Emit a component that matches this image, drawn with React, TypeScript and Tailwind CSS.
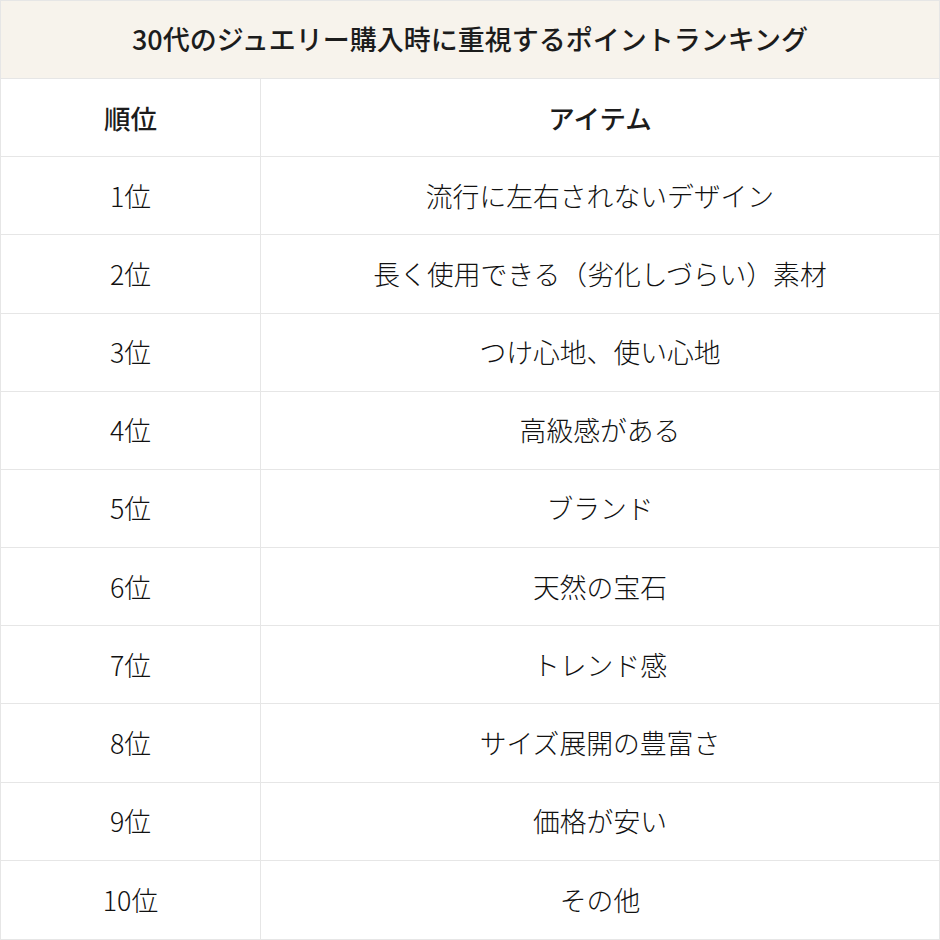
import React from "react";

const rows: string[] = [
  "流行に左右されないデザイン",
  "長く使用できる（劣化しづらい）素材",
  "つけ心地、使い心地",
  "高級感がある",
  "ブランド",
  "天然の宝石",
  "トレンド感",
  "サイズ展開の豊富さ",
  "価格が安い",
  "その他",
];

export default function App() {
  return (
    <div className="w-[940px] h-[940px] bg-white text-[#1c1c1c] grid grid-rows-12 border border-[#e6e6e6] font-['Noto_Sans_CJK_JP','Noto_Sans',sans-serif]">
      <div className="bg-[#f7f3ec] flex items-center justify-center border-b border-[#e6e6e6] text-[27px] font-medium font-['Noto_Sans_CJK_JP_Medium','Noto_Sans_CJK_JP',sans-serif]">
        30代のジュエリー購入時に重視するポイントランキング
      </div>
      <div className="grid grid-cols-[260px_1fr] border-b border-[#e6e6e6] text-[26.5px] font-medium font-['Noto_Sans_CJK_JP_Medium','Noto_Sans_CJK_JP',sans-serif]">
        <div className="flex items-center justify-center border-r border-[#e6e6e6]">順位</div>
        <div className="flex items-center justify-center">アイテム</div>
      </div>
      {rows.map((item, i) => (
        <div
          key={i}
          className={
            i === rows.length - 1
              ? "grid grid-cols-[260px_1fr] text-[26.8px] font-light text-[#111111]"
              : "grid grid-cols-[260px_1fr] border-b border-[#e6e6e6] text-[26.8px] font-light text-[#111111]"
          }
        >
          <div className="flex items-center justify-center border-r border-[#e6e6e6]">{i + 1}位</div>
          <div className="flex items-center justify-center">{item}</div>
        </div>
      ))}
    </div>
  );
}
